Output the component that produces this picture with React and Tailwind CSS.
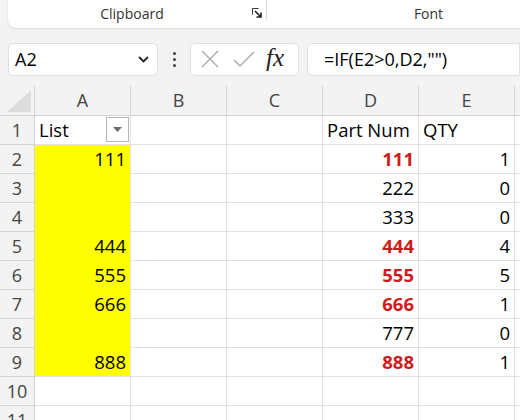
import React from 'react';

const cols = ['A', 'B', 'C', 'D', 'E', ''];

const rows = [
  { a: 'List', d: 'Part Num', e: 'QTY', header: true },
  { a: '111', d: '111', e: '1', red: true },
  { a: '', d: '222', e: '0' },
  { a: '', d: '333', e: '0' },
  { a: '444', d: '444', e: '4', red: true },
  { a: '555', d: '555', e: '5', red: true },
  { a: '666', d: '666', e: '1', red: true },
  { a: '', d: '777', e: '0' },
  { a: '888', d: '888', e: '1', red: true },
  { a: '', d: '', e: '' },
  { a: '', d: '', e: '' },
];

function FilterButton() {
  return (
    <div className="absolute right-[1px] top-[1px] w-[23px] h-[25px] border border-[#b5b5b5] bg-white flex items-center justify-center">
      <svg width="9" height="5" viewBox="0 0 9 5">
        <path d="M0 0h9L4.5 5z" fill="#6a6a6a" />
      </svg>
    </div>
  );
}

export default function App() {
  const cell = 'border-r border-b h-[29px] flex items-center px-[4px] text-[18.5px]';
  return (
    <div className="w-[520px] h-[420px] overflow-hidden bg-[#f3f3f3]" style={{ fontFamily: '"Open Sans", "Noto Sans", sans-serif' }}>
      {/* Ribbon */}
      <div className="flex h-[28px] ml-[8px] bg-white rounded-bl-[8px] shadow-[0_1px_2px_rgba(0,0,0,0.12)]">
        <div className="w-[258px] relative flex items-center justify-center text-[14px] text-[#333]">
          <span className="-ml-[10px] -mt-[2px]">Clipboard</span>
          <svg className="absolute right-[3px] top-[8px]" width="11" height="11" viewBox="0 0 11 11">
            <path d="M0.5 0.5h6M0.5 0.5v6" stroke="#333" strokeWidth="1" fill="none" />
            <path d="M3 3l6 6M9 4.5V9H4.5" stroke="#222" strokeWidth="1.6" fill="none" />
          </svg>
        </div>
        <div className="w-px bg-[#dadada] h-[20px]" />
        <div className="flex-1 flex items-center justify-center text-[14px] text-[#333] pl-[70px]">
          <span className="-mt-[2px]">Font</span>
        </div>
      </div>

      {/* Formula bar */}
      <div className="flex items-center h-[34px] mt-[14px] pl-[8px] gap-0">
        <div className="w-[150px] h-[33px] bg-white border border-[#e0e0e0] rounded-[5px] flex items-center justify-between pl-[6px] pr-[8px]">
          <span className="text-[18px] text-black">A2</span>
          <svg width="11" height="7" viewBox="0 0 11 7">
            <path d="M1 1l4.5 4.5L10 1" stroke="#222" strokeWidth="1.8" fill="none" />
          </svg>
        </div>
        <div className="w-[32px] flex flex-col items-center gap-[3px]">
          <span className="w-[3px] h-[3px] rounded-full bg-[#444]" />
          <span className="w-[3px] h-[3px] rounded-full bg-[#444]" />
          <span className="w-[3px] h-[3px] rounded-full bg-[#444]" />
        </div>
        <div className="w-[109px] h-[33px] bg-white border border-[#e0e0e0] rounded-[5px] flex items-center pl-[9px]">
          <svg width="20" height="20" viewBox="0 0 20 20">
            <path d="M2 2l16 16M18 2L2 18" stroke="#a8a8a8" strokeWidth="1.3" fill="none" />
          </svg>
          <svg className="ml-[13px]" width="22" height="18" viewBox="0 0 22 18">
            <path d="M1 10l6 6L21 2" stroke="#a8a8a8" strokeWidth="1.3" fill="none" />
          </svg>
          <span className="ml-[11px] text-[25px] italic text-[#222] leading-none -mt-[3px]" style={{ fontFamily: '"Liberation Serif", "DejaVu Serif", serif' }}>fx</span>
        </div>
        <div className="ml-[8px] flex-1 h-[33px] bg-white border border-[#e0e0e0] rounded-l-[5px] flex items-center pl-[16px] text-[18px] text-black">
          =IF(E2&gt;0,D2,"")
        </div>
      </div>

      {/* Grid */}
      <div className="mt-[10px] grid grid-cols-[35px_96px_96px_96px_96px_96px_1fr] bg-white">
        {/* header row */}
        <div className="h-[30px] bg-[#f3f3f3] border-r border-b border-[#d4d4d4] relative">
          <svg className="absolute right-[3px] bottom-[3px]" width="24" height="22" viewBox="0 0 24 22">
            <path d="M24 0V22H0z" fill="#dcdcdc" />
          </svg>
        </div>
        {cols.map((c, i) => (
          <div key={i} className="h-[30px] bg-[#f3f3f3] border-r border-b border-[#d4d4d4] flex items-center justify-center text-[18px] text-[#444]">
            {c}
          </div>
        ))}
        {rows.map((r, i) => {
          const yellow = !r.header && i < 9;
          return (
            <React.Fragment key={i}>
              <div className="h-[29px] bg-[#f3f3f3] border-r border-b border-[#d4d4d4] flex items-center justify-center text-[18px] text-[#444]">
                {i + 1}
              </div>
              <div
                className={`${cell} relative text-black ${
                  r.header
                    ? 'justify-start bg-white border-[#e1e1e1]'
                    : yellow
                    ? `justify-end bg-[#ffff00] border-r-[#e1e1e1] ${i < 8 ? 'border-b-[#ffff00]' : 'border-b-[#e1e1e1]'}`
                    : 'justify-end border-[#e1e1e1]'
                }`}
              >
                {r.a}
                {r.header && <FilterButton />}
              </div>
              <div className={`${cell} border-[#e1e1e1]`} />
              <div className={`${cell} border-[#e1e1e1]`} />
              <div
                className={`${cell} border-[#e1e1e1] ${r.header ? 'justify-start' : 'justify-end'} ${
                  r.red ? 'text-[#cf1b1b] font-bold' : 'text-black'
                }`}
              >
                {r.d}
              </div>
              <div className={`${cell} border-[#e1e1e1] text-black ${r.header ? 'justify-start' : 'justify-end'}`}>{r.e}</div>
              <div className={`${cell} border-[#e1e1e1]`} />
            </React.Fragment>
          );
        })}
      </div>
    </div>
  );
}
